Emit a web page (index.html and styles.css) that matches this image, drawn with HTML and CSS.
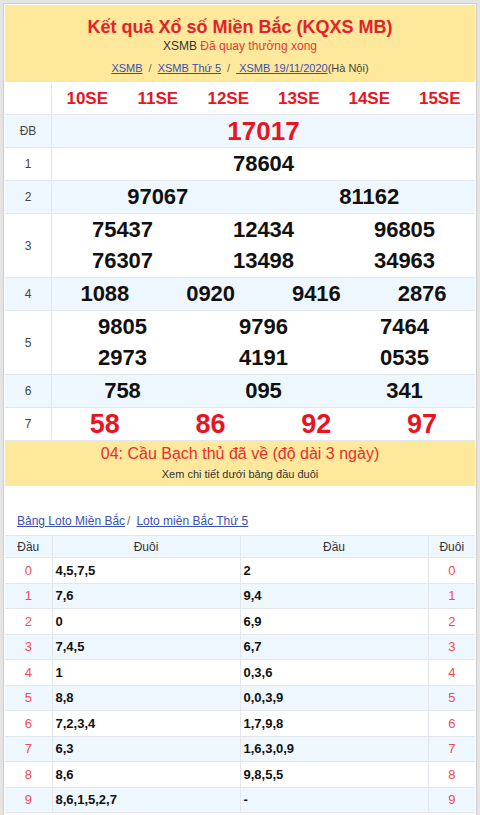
FILE: index.html
```html
<!DOCTYPE html>
<html lang="vi">
<head>
<meta charset="utf-8">
<title>KQXS MB</title>
<link rel="stylesheet" href="styles.css">
</head>
<body>
<div class="page">
  <div class="head">
    <h1 class="title">Kết quả Xổ số Miền Bắc (KQXS MB)</h1>
    <div class="sub">XSMB <span class="red">Đã quay thưởng xong</span></div>
    <div class="crumbs"><a href="#">XSMB</a><span class="sep">/</span><a href="#">XSMB Thứ 5</a><span class="sep">/</span><a href="#">&nbsp;XSMB 19/11/2020</a>(Hà Nội)</div>
  </div>

  <table class="kq">
    <tr>
      <td class="lbl"></td>
      <td><div class="g g6 code"><span>10SE</span><span>11SE</span><span>12SE</span><span>13SE</span><span>14SE</span><span>15SE</span></div></td>
    </tr>
    <tr class="alt">
      <td class="lbl">ĐB</td>
      <td><div class="g g1 db"><span>17017</span></div></td>
    </tr>
    <tr>
      <td class="lbl">1</td>
      <td><div class="g g1 num"><span>78604</span></div></td>
    </tr>
    <tr class="alt">
      <td class="lbl">2</td>
      <td><div class="g g2 num"><span>97067</span><span>81162</span></div></td>
    </tr>
    <tr>
      <td class="lbl">3</td>
      <td><div class="g g3 dbl num"><span>75437</span><span>12434</span><span>96805</span><span>76307</span><span>13498</span><span>34963</span></div></td>
    </tr>
    <tr class="alt">
      <td class="lbl">4</td>
      <td><div class="g g4 num"><span>1088</span><span>0920</span><span>9416</span><span>2876</span></div></td>
    </tr>
    <tr>
      <td class="lbl">5</td>
      <td><div class="g g3 dbl num"><span>9805</span><span>9796</span><span>7464</span><span>2973</span><span>4191</span><span>0535</span></div></td>
    </tr>
    <tr class="alt">
      <td class="lbl">6</td>
      <td><div class="g g3 num"><span>758</span><span>095</span><span>341</span></div></td>
    </tr>
    <tr>
      <td class="lbl">7</td>
      <td><div class="g g4 g7"><span>58</span><span>86</span><span>92</span><span>97</span></div></td>
    </tr>
  </table>

  <div class="note">
    <div class="note-main">04: Cầu Bạch thủ đã về (độ dài 3 ngày)</div>
    <div class="note-sub">Xem chi tiết dưới bảng đầu đuôi</div>
  </div>

  <div class="crumbs2"><a href="#">Bảng Loto Miền Bắc</a><span class="sep2">/</span><a href="#">Loto miền Bắc Thứ 5</a></div>

  <table class="loto">
    <colgroup><col class="c1"><col class="c2"><col class="c3"><col class="c4"></colgroup>
    <tr class="lh"><th>Đầu</th><th>Đuôi</th><th>Đầu</th><th>Đuôi</th></tr>
    <tr><td class="d">0</td><td class="v">4,5,7,5</td><td class="v">2</td><td class="d">0</td></tr>
    <tr class="alt"><td class="d">1</td><td class="v">7,6</td><td class="v">9,4</td><td class="d">1</td></tr>
    <tr><td class="d">2</td><td class="v">0</td><td class="v">6,9</td><td class="d">2</td></tr>
    <tr class="alt"><td class="d">3</td><td class="v">7,4,5</td><td class="v">6,7</td><td class="d">3</td></tr>
    <tr><td class="d">4</td><td class="v">1</td><td class="v">0,3,6</td><td class="d">4</td></tr>
    <tr class="alt"><td class="d">5</td><td class="v">8,8</td><td class="v">0,0,3,9</td><td class="d">5</td></tr>
    <tr><td class="d">6</td><td class="v">7,2,3,4</td><td class="v">1,7,9,8</td><td class="d">6</td></tr>
    <tr class="alt"><td class="d">7</td><td class="v">6,3</td><td class="v">1,6,3,0,9</td><td class="d">7</td></tr>
    <tr><td class="d">8</td><td class="v">8,6</td><td class="v">9,8,5,5</td><td class="d">8</td></tr>
    <tr class="alt"><td class="d">9</td><td class="v">8,6,1,5,2,7</td><td class="v">-</td><td class="d">9</td></tr>
  </table>
</div>
</body>
</html>
```

FILE: styles.css
```css
html, body {
  margin: 0;
  padding: 0;
}
body {
  background: #e4e4e4;
  font-family: "Liberation Sans", Arial, sans-serif;
  color: #222;
}
.page {
  margin: 3px 3px 0 3px;
  border: 1px solid #cdcdcd;
  background: #fff;
  padding: 1px 1px 0 1px;
  min-height: 820px;
}
.head {
  background: #fee89c;
  text-align: center;
  height: 77px;
  padding-top: 12px;
  box-sizing: border-box;
}
.title {
  margin: 0;
  font-size: 18px;
  line-height: 20px;
  font-weight: bold;
  color: #e3222a;
}
.sub {
  margin-top: 1px;
  font-size: 12px;
  line-height: 16px;
  color: #333;
}
.red { color: #e53a31; }
.crumbs {
  margin-top: 6px;
  font-size: 11px;
  line-height: 16px;
  color: #444;
}
a {
  color: #3a4fb0;
  text-decoration: underline;
}
.sep {
  color: #666;
  margin: 0 6px;
}
.kq {
  width: 100%;
  border-collapse: collapse;
  table-layout: fixed;
}
.kq td {
  border: 1px solid #e3e6ea;
  padding: 0;
  vertical-align: middle;
  line-height: 1;
}
.kq tr:first-child td { border-top: none; }
.kq td:first-child { border-left: none; }
.kq td:last-child { border-right: none; }
.kq .lbl {
  width: 46px;
  text-align: center;
  font-size: 12px;
  color: #444;
}
.kq tr.alt td { background: #eef6fe; }
.g {
  display: grid;
  grid-auto-rows: 32px;
  align-items: center;
  justify-items: center;
}
.g.dbl { grid-auto-rows: 31.5px; }
.g1 { grid-template-columns: 1fr; }
.g2 { grid-template-columns: 1fr 1fr; }
.g3 { grid-template-columns: 1fr 1fr 1fr; }
.g4 { grid-template-columns: repeat(4, 1fr); }
.g6 { grid-template-columns: repeat(6, 1fr); }
.code {
  color: #e8141f;
  font-weight: bold;
  font-size: 17px;
}
.db {
  color: #e8141f;
  font-weight: bold;
  font-size: 26px;
}
.num {
  color: #111;
  font-weight: bold;
  font-size: 22px;
}
.g7 {
  color: #e8141f;
  font-weight: bold;
  font-size: 27px;
}
.note {
  background: #fee89c;
  text-align: center;
  height: 45px;
  box-sizing: border-box;
  padding-top: 3px;
}
.note-main {
  font-size: 16px;
  line-height: 20px;
  color: #e5302c;
}
.note-sub {
  margin-top: 3px;
  font-size: 11px;
  line-height: 14px;
  color: #333;
}
.crumbs2 {
  padding: 27px 0 0 12px;
  height: 49px;
  box-sizing: border-box;
  font-size: 12px;
  line-height: 16px;
  color: #666;
}
.sep2 { margin: 0 6px 0 2px; }
.loto {
  width: 100%;
  border-collapse: collapse;
  table-layout: fixed;
  font-size: 12px;
}
.loto .c1 { width: 47px; }
.loto .c4 { width: 47px; }
.loto th, .loto td {
  border: 1px solid #e3e6ea;
  padding: 0;
}
.loto tr td:first-child, .loto tr th:first-child { border-left: none; }
.loto tr td:last-child, .loto tr th:last-child { border-right: none; }
.loto th {
  height: 21px;
  font-weight: normal;
  color: #333;
  background: #eef6fe;
}
.loto td { height: 24.5px; }
.loto tr.alt td { background: #eef6fe; }
.loto .d {
  text-align: center;
  color: #ef4a52;
  font-size: 13px;
}
.loto .v {
  padding-left: 3px;
  font-weight: bold;
  color: #111;
  font-size: 13px;
}
```
